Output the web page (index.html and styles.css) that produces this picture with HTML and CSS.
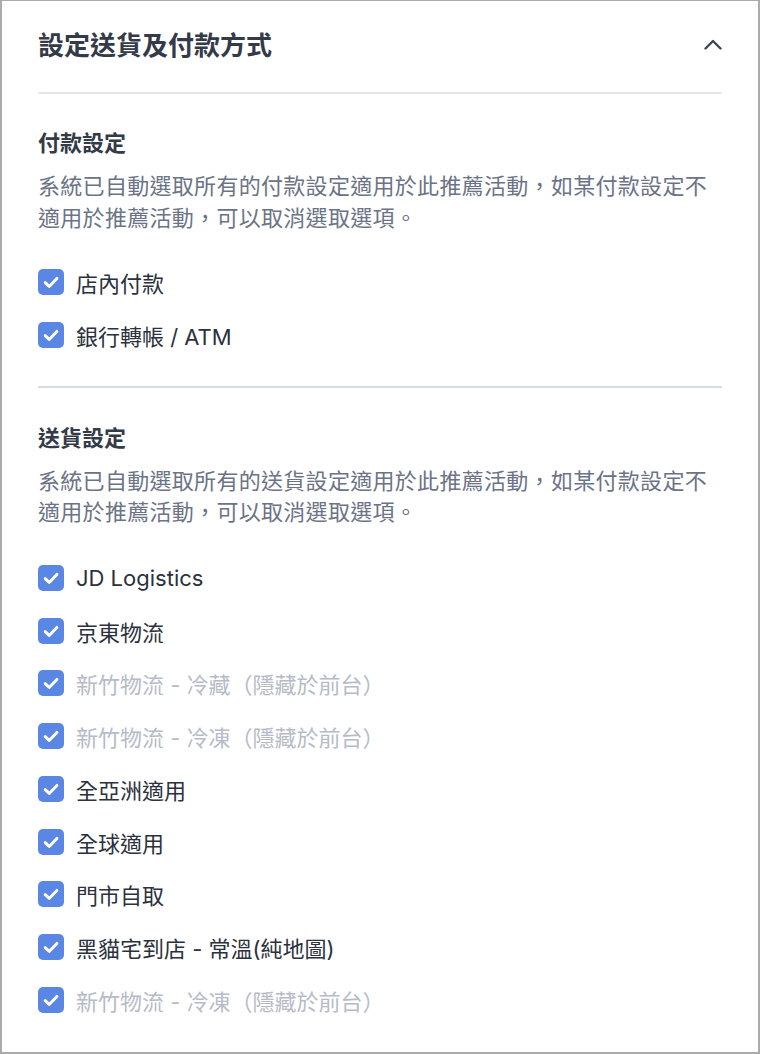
FILE: index.html
```html
<!DOCTYPE html>
<html lang="zh-Hant">
<head>
    <meta charset="UTF-8">
    <meta name="viewport" content="width=device-width, initial-scale=1.0">
    <title>設定送貨及付款方式</title>
    <link rel="stylesheet" href="styles.css">
</head>
<body>
    <div class="panel">
        <div class="panel-header">
            <h1>設定送貨及付款方式</h1>
            <svg class="chevron" width="18" height="11" viewBox="0 0 18 11">
                <path d="M1.5 9.5 L9 2 L16.5 9.5" fill="none" stroke="#3f4655" stroke-width="2.4" stroke-linecap="round" stroke-linejoin="round"/>
            </svg>
        </div>

        <hr class="divider light">

        <div class="section">
            <h2>付款設定</h2>
            <p class="desc">系統已自動選取所有的付款設定適用於此推薦活動，如某付款設定不<br>適用於推薦活動，可以取消選取選項。</p>
            <ul class="options">
                <li class="option"><span class="check"></span>店內付款</li>
                <li class="option"><span class="check"></span>銀行轉帳 / ATM</li>
            </ul>
        </div>

        <hr class="divider">

        <div class="section second">
            <h2>送貨設定</h2>
            <p class="desc">系統已自動選取所有的送貨設定適用於此推薦活動，如某付款設定不<br>適用於推薦活動，可以取消選取選項。</p>
            <ul class="options">
                <li class="option"><span class="check"></span>JD Logistics</li>
                <li class="option"><span class="check"></span>京東物流</li>
                <li class="option disabled"><span class="check"></span>新竹物流 - 冷藏（隱藏於前台）</li>
                <li class="option disabled"><span class="check"></span>新竹物流 - 冷凍（隱藏於前台）</li>
                <li class="option"><span class="check"></span>全亞洲適用</li>
                <li class="option"><span class="check"></span>全球適用</li>
                <li class="option"><span class="check"></span>門市自取</li>
                <li class="option"><span class="check"></span>黑貓宅到店 - 常溫(純地圖)</li>
                <li class="option disabled"><span class="check"></span>新竹物流 - 冷凍（隱藏於前台）</li>
            </ul>
        </div>
    </div>

    <script>
        // draw the tick inside every checkbox
        const tick = '<svg width="26" height="26" viewBox="0 0 26 26"><path d="M7.2 13.6 L11.2 17.4 L18.9 9.4" fill="none" stroke="#fff" stroke-width="2.9" stroke-linecap="round" stroke-linejoin="round"/></svg>';
        document.querySelectorAll('.check').forEach(el => el.innerHTML = tick);
    </script>
</body>
</html>
```

FILE: styles.css
```css
* {
    box-sizing: border-box;
}

body {
    margin: 0;
    background: #FFF;
    font-family: Inter, "Noto Sans CJK TC", sans-serif;
}

.panel {
    width: 760px;
    height: 1054px;
    border: 2px solid #ababab;
    border-top-width: 1px;
    padding: 25px 36px 0;
    overflow: hidden;
}

.panel-header {
    display: flex;
    justify-content: space-between;
    align-items: center;
    height: 36px;
}

h1 {
    margin: 0;
    font-size: 26px;
    font-weight: 700;
    line-height: 36px;
    color: #333a48;
    font-family: "Noto Sans CJK TC", sans-serif;
}

.chevron {
    margin-top: 0;
}

.divider {
    margin: 0;
    border: none;
    height: 2px;
    background: #d6dce4;
}

.divider.light {
    margin-top: 30px;
    background: #e3e7ec;
}

.section {
    padding-top: 31px;
    padding-bottom: 24px;
}

.section.second {
    padding-top: 32px;
}

.section.second .options {
    margin-top: 25px;
}

h2 {
    margin: 0;
    font-size: 22px;
    font-weight: 700;
    line-height: 32px;
    color: #333a48;
    font-family: "Noto Sans CJK TC", sans-serif;
}

.desc {
    margin: 12px 0 0;
    font-size: 22px;
    line-height: 31.5px;
    letter-spacing: 0.3px;
    color: #6b7386;
    font-family: "Noto Sans CJK TC", sans-serif;
}

.options {
    list-style: none;
    margin: 24px 0 0;
    padding: 0;
}

.option {
    display: flex;
    align-items: center;
    height: 52.75px;
    font-size: 22px;
    color: #2b313d;
}

.option.disabled {
    color: #b6bbc8;
}

.check {
    width: 26px;
    height: 26px;
    border-radius: 5px;
    background: #5b87e4;
    margin-right: 12px;
    flex-shrink: 0;
}

.check svg {
    display: block;
}
```
